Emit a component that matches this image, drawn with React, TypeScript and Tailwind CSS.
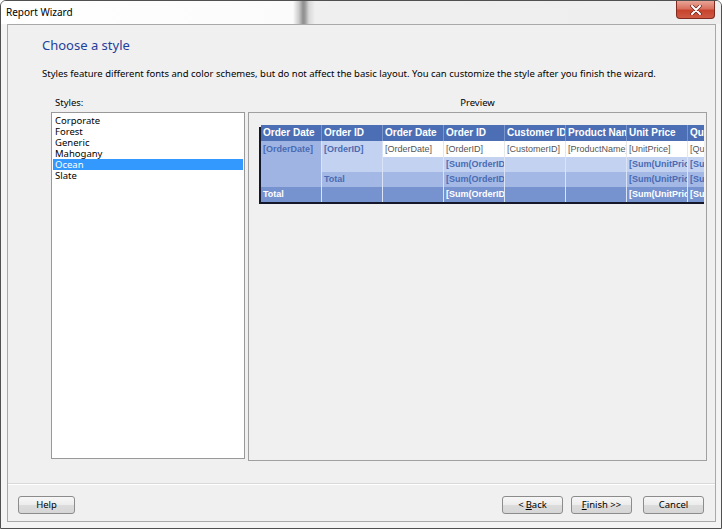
import React from "react";

const body = "text-[9px] leading-[15px] pl-[2px] overflow-hidden whitespace-nowrap border-r border-[#dbe4f6]";
const hd = "bg-[#4b6eb5] text-white font-bold text-[10px] leading-[16px] pl-[2px] overflow-hidden whitespace-nowrap border-r border-[#7b96cc]";
const blue = "text-[#4a6bb3] font-bold";

function Btn({ w, children }: { w: string; children: React.ReactNode }) {
  return (
    <div
      className={`${w} h-[18px] flex items-center justify-center rounded-[3px] border border-[#8c8c8c] bg-[linear-gradient(to_bottom,#f7f7f7_0%,#ececec_50%,#dcdcdc_51%,#d6d6d6_100%)] text-[9.5px] text-black leading-none`}
    >
      {children}
    </div>
  );
}

export default function App() {
  const styles = ["Corporate", "Forest", "Generic", "Mahogany", "Ocean", "Slate"];
  return (
    <div className="w-[722px] h-[529px] border border-[#505050] rounded-t-[6px] bg-[#f4f4f4] flex flex-col overflow-hidden font-['Noto_Sans',sans-serif] text-black">
      {/* title bar */}
      <div className="h-[23px] flex items-start justify-between bg-[linear-gradient(to_right,#ffffff_0px,#fbfbfb_292px,#c9c9c9_298px,#8f8f8f_302px,#9a9a9a_304px,#d8d8d8_308px,#efefef_314px,#eeeeee_100%)]">
        <div className="pl-[5px] pt-[4px] text-[10px] leading-[14px]">Report Wizard</div>
        <div className="mr-[6px] w-[39px] h-[18px] rounded-b-[4px] border border-t-0 border-[#7e2a20] bg-[linear-gradient(to_bottom,#e9a596_0%,#d9715f_45%,#c7432d_55%,#cf5a44_100%)] flex items-center justify-center">
          <svg width="12" height="10" viewBox="0 0 12 10">
            <path d="M2 1 L10 9 M10 1 L2 9" stroke="#6b2016" strokeWidth="3.4" strokeLinecap="round" />
            <path d="M2 1 L10 9 M10 1 L2 9" stroke="#ffffff" strokeWidth="2" strokeLinecap="round" />
          </svg>
        </div>
      </div>

      {/* panel */}
      <div className="ml-[6px] mr-[5px] mb-[6px] flex-1 border border-[#a9a9a9] bg-[#f0f0f0] flex flex-col">
        <div className="mt-[11px] pl-[34px] text-[13px] leading-[18px] text-[#1e3f9c]">Choose a style</div>
        <div className="mt-[13px] pl-[34px] text-[9.5px] leading-[14px]">
          Styles feature different fonts and color schemes, but do not affect the basic layout. You can customize the style after you finish the wizard.
        </div>

        <div className="mt-[15px] pl-[43px] flex gap-[3px] text-[9.5px] leading-[14px]">
          <div className="w-[194px] pl-[4px]">Styles:</div>
          <div className="w-[459px] text-center">Preview</div>
        </div>

        <div className="mt-[2px] pl-[43px] flex gap-[3px] items-start">
          <div className="w-[194px] h-[347px] border border-[#999] bg-white pt-[2px] px-px">
            {styles.map((s) => (
              <div
                key={s}
                className={`h-[11px] leading-[11px] text-[9.5px] pl-[2px] ${s === "Ocean" ? "bg-[#3399ff] text-white" : ""}`}
              >
                {s}
              </div>
            ))}
          </div>

          <div className="w-[459px] h-[349px] border border-[#a0a0a0] bg-[#f0f0f0]">
            <div className="ml-[10px] mt-[12px] mr-[2px] pl-[2px] pb-[3px] overflow-hidden">
              <div className="grid w-max grid-cols-[repeat(8,61px)] grid-rows-[16px_16px_15px_15px_15px] shadow-[-2px_2px_0_#15172a] font-['Liberation_Sans',Arial,sans-serif]">
                <div className={hd}>Order Date</div>
                <div className={hd}>Order ID</div>
                <div className={hd}>Order Date</div>
                <div className={hd}>Order ID</div>
                <div className={hd}>Customer ID</div>
                <div className={hd}>Product Name</div>
                <div className={hd}>Unit Price</div>
                <div className={hd}>Quantity</div>

                <div className={`${body} ${blue} row-span-3 bg-[#9fb4e2] leading-[16px]`}>[OrderDate]</div>
                <div className={`${body} ${blue} row-span-2 bg-[#c3d2f1] leading-[16px]`}>[OrderID]</div>
                <div className={`${body} bg-white text-[#555] leading-[16px] border-[#e6e6e6]`}>[OrderDate]</div>
                <div className={`${body} bg-white text-[#555] leading-[16px] border-[#e6e6e6]`}>[OrderID]</div>
                <div className={`${body} bg-white text-[#555] leading-[16px] border-[#e6e6e6]`}>[CustomerID]</div>
                <div className={`${body} bg-white text-[#555] leading-[16px] border-[#e6e6e6]`}>[ProductName]</div>
                <div className={`${body} bg-white text-[#555] leading-[16px] border-[#e6e6e6]`}>[UnitPrice]</div>
                <div className={`${body} bg-white text-[#555] leading-[16px] border-[#e6e6e6]`}>[Quantity]</div>

                <div className={`${body} bg-[#c3d2f1]`}></div>
                <div className={`${body} ${blue} bg-[#c3d2f1]`}>[Sum(OrderID)]</div>
                <div className={`${body} bg-[#c3d2f1]`}></div>
                <div className={`${body} bg-[#c3d2f1]`}></div>
                <div className={`${body} ${blue} bg-[#c3d2f1]`}>[Sum(UnitPrice)]</div>
                <div className={`${body} ${blue} bg-[#c3d2f1]`}>[Sum(Quantity)]</div>

                <div className={`${body} ${blue} bg-[#a3b8e5]`}>Total</div>
                <div className={`${body} bg-[#a3b8e5]`}></div>
                <div className={`${body} ${blue} bg-[#a3b8e5]`}>[Sum(OrderID)]</div>
                <div className={`${body} bg-[#a3b8e5]`}></div>
                <div className={`${body} bg-[#a3b8e5]`}></div>
                <div className={`${body} ${blue} bg-[#a3b8e5]`}>[Sum(UnitPrice)]</div>
                <div className={`${body} ${blue} bg-[#a3b8e5]`}>[Sum(Quantity)]</div>

                <div className={`${body} bg-[#7693d0] text-white font-bold border-[#9fb3e0]`}>Total</div>
                <div className={`${body} bg-[#7693d0] border-[#9fb3e0]`}></div>
                <div className={`${body} bg-[#7693d0] border-[#9fb3e0]`}></div>
                <div className={`${body} bg-[#7693d0] text-white font-bold border-[#9fb3e0]`}>[Sum(OrderID)]</div>
                <div className={`${body} bg-[#7693d0] border-[#9fb3e0]`}></div>
                <div className={`${body} bg-[#7693d0] border-[#9fb3e0]`}></div>
                <div className={`${body} bg-[#7693d0] text-white font-bold border-[#9fb3e0]`}>[Sum(UnitPrice)]</div>
                <div className={`${body} bg-[#7693d0] text-white font-bold border-[#9fb3e0]`}>[Sum(Quantity)]</div>
              </div>
            </div>
          </div>
        </div>

        <div className="mt-[22px] h-[2px] border-t border-b border-t-[#d9d9d9] border-b-white"></div>

        <div className="mt-[11px] pl-[10px] pr-[11px] flex justify-between">
          <Btn w="w-[57px]">Help</Btn>
          <div className="flex">
            <Btn w="w-[61px]">
              &lt; <span className="underline ml-[2px]">B</span>ack
            </Btn>
            <div className="ml-[8px]">
              <Btn w="w-[61px]">
                <span className="underline">F</span>inish &gt;&gt;
              </Btn>
            </div>
            <div className="ml-[11px]">
              <Btn w="w-[61px]">Cancel</Btn>
            </div>
          </div>
        </div>
      </div>
    </div>
  );
}
